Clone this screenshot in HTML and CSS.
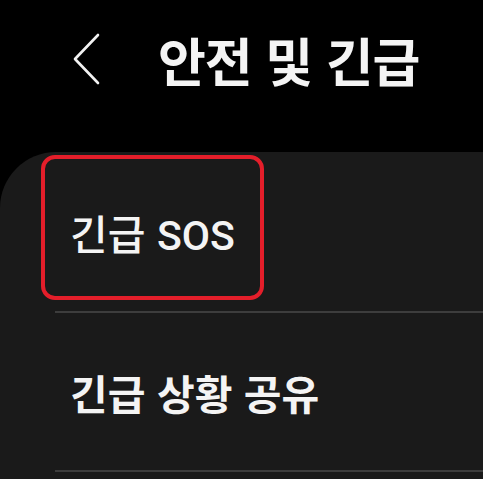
FILE: index.html
```html
<!DOCTYPE html>
<html lang="ko">
  <head>
    <meta charset="UTF-8" />
    <title>안전 및 긴급</title>
    <link rel="stylesheet" href="styles.css">
  </head>
  <body>
    <div class="header">
      <button class="back" aria-label="뒤로">
        <svg width="30" height="52" viewBox="0 0 30 52">
          <polyline points="26,2 3,26 26,50" fill="none" stroke="#f2f2f2" stroke-width="2.6" stroke-linecap="round" stroke-linejoin="round" />
        </svg>
      </button>
      <h1>안전 및 긴급</h1>
    </div>

    <div class="card">
      <div class="item first">
        <span class="label">긴급 <span class="latin">SOS</span></span>
        <div class="highlight"></div>
      </div>
      <div class="item">
        <span class="label strong">긴급 상황 공유</span>
      </div>
    </div>
  </body>
</html>
```

FILE: styles.css
```css
body {
  margin: 0;
  background: #000;
  color: #f4f4f4;
  font-family: "Noto Sans CJK KR", "Noto Sans", sans-serif;
  height: 100vh;
  overflow: hidden;
}
.header {
  height: 152px;
  display: flex;
  align-items: center;
  padding-left: 72px;
  box-sizing: border-box;
  padding-bottom: 34px;
}
.back {
  background: none;
  border: none;
  padding: 0;
  width: 30px;
  height: 52px;
  margin-right: 56px;
}
.back svg {
  display: block;
}
h1 {
  margin: 0;
  font-size: 52px;
  font-weight: 700;
  letter-spacing: -1px;
}
.card {
  background: #1a1a1a;
  border-top-left-radius: 56px;
  padding-left: 55px;
  height: calc(100vh - 152px);
  box-sizing: border-box;
}
.item {
  position: relative;
  height: 157px;
  display: flex;
  align-items: center;
  padding-left: 15px;
  border-bottom: 2px solid #3d3d3d;
}
.item.first {
  height: 159px;
}
.label {
  font-size: 41px;
  font-weight: 500;
}
.label .latin {
  font-family: Roboto, sans-serif;
}
.label.strong {
  font-weight: 700;
}
.highlight {
  position: absolute;
  left: -14px;
  top: 3px;
  width: 215px;
  height: 137px;
  border: 4px solid #e41e2a;
  border-radius: 14px;
}
```
